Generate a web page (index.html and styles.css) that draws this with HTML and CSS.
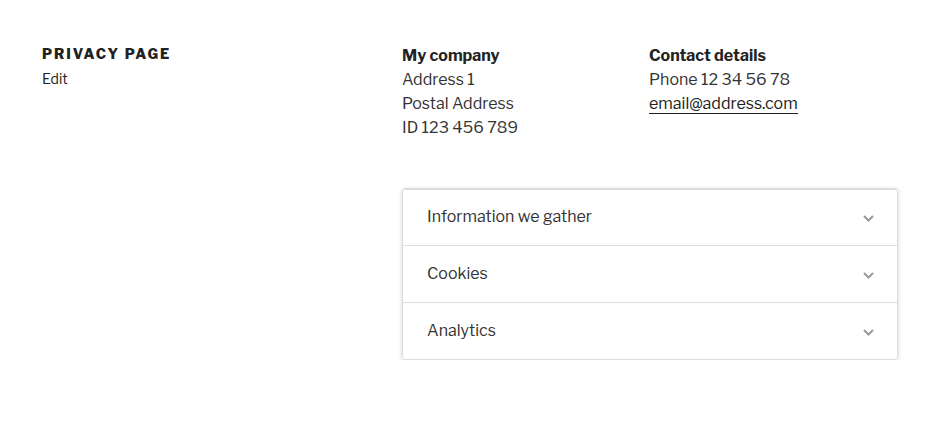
FILE: index.html
```html
<!DOCTYPE html>
<html lang="en">
<head>
<meta charset="utf-8">
<title>Privacy page</title>
<link rel="stylesheet" href="styles.css">
</head>
<body>
<div class="page">
  <header class="page-header">
    <h1 class="page-title">Privacy page</h1>
    <a class="edit-link" href="#">Edit</a>
  </header>
  <main class="content">
    <div class="info">
      <div class="info-col">
        <strong>My company</strong>
        <span>Address 1</span>
        <span>Postal Address</span>
        <span>ID 123 456 789</span>
      </div>
      <div class="info-col">
        <strong>Contact details</strong>
        <span>Phone 12 34 56 78</span>
        <span><a class="mail" href="#">email@address.com</a></span>
      </div>
    </div>
    <div class="accordion">
      <div class="acc-item">
        <span class="acc-title">Information we gather</span>
        <svg class="chev" width="11" height="7" viewBox="0 0 11 7"><path d="M1 1 L5.5 5.5 L10 1" fill="none" stroke="#999" stroke-width="2"/></svg>
      </div>
      <div class="acc-item">
        <span class="acc-title">Cookies</span>
        <svg class="chev" width="11" height="7" viewBox="0 0 11 7"><path d="M1 1 L5.5 5.5 L10 1" fill="none" stroke="#999" stroke-width="2"/></svg>
      </div>
      <div class="acc-item">
        <span class="acc-title">Analytics</span>
        <svg class="chev" width="11" height="7" viewBox="0 0 11 7"><path d="M1 1 L5.5 5.5 L10 1" fill="none" stroke="#999" stroke-width="2"/></svg>
      </div>
    </div>
  </main>
</div>
</body>
</html>
```
FILE: styles.css
```css
html, body {
  margin: 0;
  padding: 0;
  background: #fff;
}
body {
  font-family: "Libre Franklin", Inter, "Liberation Sans", sans-serif;
  color: #333;
  font-size: 16px;
}
.page {
  display: grid;
  grid-template-columns: 360px 496px;
  padding: 43px 0 0 42px;
}
.page-header {
  display: flex;
  flex-direction: column;
  align-items: flex-start;
}
.page-title {
  margin: 0;
  font-size: 14px;
  font-weight: 800;
  letter-spacing: 0.14em;
  text-transform: uppercase;
  color: #222;
  line-height: 21px;
}
.edit-link {
  font-size: 14px;
  color: #222;
  text-decoration: none;
  line-height: 21px;
  margin-top: 4px;
}
.info {
  display: grid;
  grid-template-columns: 247px 1fr;
  line-height: 24px;
  margin-top: 1px;
}
.info-col {
  display: flex;
  flex-direction: column;
}
.info-col strong {
  color: #222;
  font-weight: 700;
}
.mail {
  color: #222;
  text-decoration: none;
  border-bottom: 1px solid #222;
}
.accordion {
  margin-top: 48px;
  border: 1px solid #ddd;
  border-radius: 3px;
  box-shadow: 0 1px 4px rgba(0,0,0,0.18);
}
.acc-item {
  height: 56px;
  box-sizing: border-box;
  display: flex;
  align-items: center;
  justify-content: space-between;
  padding: 0 23px 2px 24px;
  border-top: 1px solid #ddd;
}
.acc-item + .acc-item {
  height: 57px;
}
.acc-title {
  color: #333;
}
.chev {
  display: block;
  margin-top: 4px;
}
```
